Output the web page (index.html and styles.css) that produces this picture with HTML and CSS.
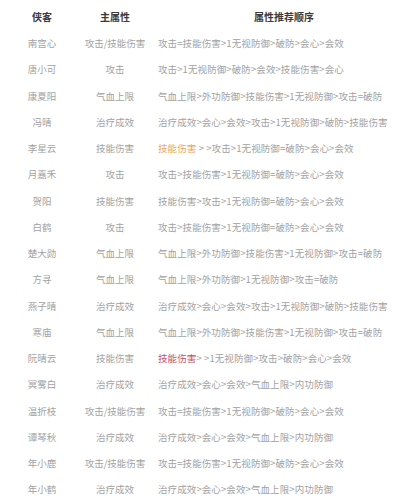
FILE: index.html
```html
<!DOCTYPE html>
<html lang="zh">
<head>
<meta charset="utf-8">
<link rel="stylesheet" href="styles.css">
</head>
<body>
<div class="table">
  <div class="row head">
    <div class="c1">侠客</div><div class="c2">主属性</div><div class="c3">属性推荐顺序</div>
  </div>
  <div class="row"><div class="c1">南宫心</div><div class="c2">攻击/技能伤害</div><div class="c3">攻击=技能伤害>1无视防御>破防>会心>会效</div></div>
  <div class="row"><div class="c1">唐小可</div><div class="c2">攻击</div><div class="c3">攻击>1无视防御>破防>会效>技能伤害>会心</div></div>
  <div class="row"><div class="c1">康夏阳</div><div class="c2">气血上限</div><div class="c3">气血上限>外功防御>技能伤害>1无视防御>攻击=破防</div></div>
  <div class="row"><div class="c1">冯晴</div><div class="c2">治疗成效</div><div class="c3">治疗成效>会心>会效>攻击>1无视防御>破防>技能伤害</div></div>
  <div class="row"><div class="c1">李星云</div><div class="c2">技能伤害</div><div class="c3"><span class="orange">技能伤害</span> > >攻击>1无视防御=破防>会心>会效</div></div>
  <div class="row"><div class="c1">月嘉禾</div><div class="c2">攻击</div><div class="c3">攻击>技能伤害>1无视防御=破防>会心>会效</div></div>
  <div class="row"><div class="c1">贺阳</div><div class="c2">技能伤害</div><div class="c3">技能伤害>攻击>1无视防御=破防>会心>会效</div></div>
  <div class="row"><div class="c1">白鹤</div><div class="c2">攻击</div><div class="c3">攻击>技能伤害>1无视防御=破防>会心>会效</div></div>
  <div class="row"><div class="c1">楚大勋</div><div class="c2">气血上限</div><div class="c3">气血上限>外功防御>技能伤害>1无视防御>攻击=破防</div></div>
  <div class="row"><div class="c1">方寻</div><div class="c2">气血上限</div><div class="c3">气血上限>外功防御>1无视防御>攻击=破防</div></div>
  <div class="row"><div class="c1">燕子晴</div><div class="c2">治疗成效</div><div class="c3">治疗成效>会心>会效>攻击>1无视防御>破防>技能伤害</div></div>
  <div class="row"><div class="c1">寒庙</div><div class="c2">气血上限</div><div class="c3">气血上限>外功防御>技能伤害>1无视防御>攻击=破防</div></div>
  <div class="row"><div class="c1">阮晴云</div><div class="c2">技能伤害</div><div class="c3"><span class="rose">技能伤害</span>> >1无视防御>攻击>破防>会心>会效</div></div>
  <div class="row"><div class="c1">冥雾白</div><div class="c2">治疗成效</div><div class="c3">治疗成效>会心>会效>气血上限>内功防御</div></div>
  <div class="row"><div class="c1">温折枝</div><div class="c2">攻击/技能伤害</div><div class="c3">攻击=技能伤害>1无视防御>破防>会心>会效</div></div>
  <div class="row"><div class="c1">谭琴秋</div><div class="c2">治疗成效</div><div class="c3">治疗成效>会心>会效>气血上限>内功防御</div></div>
  <div class="row"><div class="c1">年小鹿</div><div class="c2">攻击/技能伤害</div><div class="c3">攻击=技能伤害>1无视防御>破防>会心>会效</div></div>
  <div class="row"><div class="c1">年小鹤</div><div class="c2">治疗成效</div><div class="c3">治疗成效>会心>会效>气血上限>内功防御</div></div>
</div>
</body>
</html>
```

FILE: styles.css
```css
html, body {
  margin: 0;
  padding: 0;
  background: #ffffff;
}
body {
  font-family: "Noto Sans CJK SC", "Noto Sans", sans-serif;
  font-size: 9.5px;
  color: #a2a2a2;
}
.table {
  padding: 3px 0 0 8px;
}
.row {
  display: grid;
  grid-template-columns: 68px 78px 1fr;
  height: 26.25px;
  align-items: center;
  white-space: nowrap;
}
.row.head {
  height: 27px;
  font-size: 10px;
  font-weight: bold;
  color: #3a3a3a;
}
.c1, .c2 {
  text-align: center;
}
.c3 {
  padding-left: 4px;
  letter-spacing: 0.1px;
}
.head .c3 {
  text-align: center;
  padding-left: 0;
  letter-spacing: 0;
}
.orange {
  color: #eaa661;
}
.rose {
  color: #c0506c;
}
```
